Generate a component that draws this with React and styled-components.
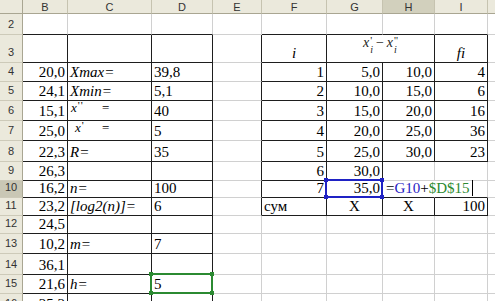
import React from "react";
import styled, { createGlobalStyle } from "styled-components";

const GlobalStyle = createGlobalStyle`
  html, body { margin: 0; padding: 0; background: #fff; overflow: hidden; }
  #root { width: 495px; height: 301px; overflow: hidden; }
`;

const COLS = ["B", "C", "D", "E", "F", "G", "H", "I", "J"];
const COL_W = [45, 84, 61, 49, 65, 56, 52, 53, 60];
const ROWS = [2, 3, 4, 5, 6, 7, 8, 9, 10, 11, 12, 13, 14, 15, 16];
const ROW_H = { 2: 21, 3: 28, 4: 19, 5: 19, 6: 20, 7: 20, 8: 21, 9: 19, 10: 17, 11: 18, 12: 18, 13: 20, 14: 21, 15: 19, 16: 20 };
const ACTIVE_COL = "H";
const ACTIVE_ROW = 10;

const Sheet = styled.div`
  display: grid;
  grid-template-columns: ${(p) => p.$cols};
  grid-template-rows: ${(p) => p.$rows};
  width: 495px;
  height: 301px;
  overflow: hidden;
  background: #fff;
`;

const Corner = styled.div`
  box-sizing: border-box;
  background: #ebe9dc;
  border-right: 1px solid #a9a692;
  border-bottom: 1px solid #a9a692;
`;

const ColHead = styled.div`
  box-sizing: border-box;
  background: ${(p) => (p.$active ? "#d2d0bd" : "#ebe9dc")};
  border-right: 1px solid #c6c3b0;
  border-bottom: 1px solid #a9a692;
  font-family: "Liberation Sans", Arial, sans-serif;
  font-size: 11px;
  line-height: 14px;
  color: #333;
  text-align: center;
  overflow: hidden;
`;

const RowHead = styled.div`
  box-sizing: border-box;
  background: ${(p) => (p.$active ? "#c9c7b5" : "#ebe9dc")};
  border-right: 1px solid #a9a692;
  border-bottom: 1px solid #cdcab9;
  font-family: "Liberation Sans", Arial, sans-serif;
  font-size: 11px;
  line-height: 11px;
  color: #333;
  display: flex;
  align-items: flex-end;
  justify-content: center;
  padding-bottom: 4px;
`;

const LINE = { dark: "#1e1e1e", grid: "#d0d0d0" };

const Cell = styled.div`
  box-sizing: border-box;
  position: relative;
  display: flex;
  align-items: flex-end;
  justify-content: ${(p) =>
    p.$align === "right" ? "flex-end" : p.$align === "center" ? "center" : "flex-start"};
  padding: 0 2px 1px 2px;
  border-right: 1px solid ${(p) => LINE[p.$rb]};
  border-bottom: 1px solid ${(p) => LINE[p.$bb]};
  grid-column: ${(p) => (p.$span ? `span ${p.$span}` : "auto")};
  font-family: "Liberation Serif", "Times New Roman", serif;
  font-size: 15px;
  line-height: 15px;
  font-style: ${(p) => (p.$italic ? "italic" : "normal")};
  white-space: nowrap;
  color: #000;
`;

const Embedded = styled.span`
  display: inline-flex;
  align-items: baseline;
  margin-bottom: 5px;
  padding-left: ${(p) => p.$indent}px;
  font-family: "Liberation Serif", "Times New Roman", serif;
  font-size: 13px;
  line-height: 13px;
`;

const EmbVar = styled.span`
  display: inline-flex;
  align-items: baseline;
  width: ${(p) => p.$w}px;
  font-style: italic;
`;

const Prime = styled.span`
  display: inline-block;
  font-size: 11px;
  font-style: normal;
  line-height: 11px;
  margin-left: 1px;
  letter-spacing: 1px;
  transform: translateY(-3px);
`;

const Scripts = styled.span`
  display: inline-flex;
  flex-direction: column;
  align-items: flex-start;
  margin-left: 1px;
  font-size: 10px;
  line-height: 7px;
  transform: translateY(-3px);
`;

const ScriptUp = styled.span`
  font-style: normal;
  font-size: 11px;
`;

const ScriptDown = styled.span`
  font-style: italic;
  padding-top: 2px;
`;

const MathHead = styled.span`
  display: inline-flex;
  align-items: baseline;
  margin-bottom: 5px;
  font-family: "Liberation Serif", "Times New Roman", serif;
  font-size: 14px;
  line-height: 14px;
  color: #222;
`;

const MathVar = styled.span`
  font-style: italic;
`;

const Minus = styled.span`
  margin: 0 3px 0 3px;
`;

const RangeFrame = styled.div`
  position: absolute;
  left: -2px;
  top: -2px;
  right: -1px;
  bottom: -1px;
  border: 2px solid ${(p) => p.$color};
  z-index: 3;
  pointer-events: none;
`;

const Handle = styled.span`
  position: absolute;
  width: 4px;
  height: 4px;
  background: ${(p) => p.$color};
  ${(p) => (p.$v === "top" ? "top: -3px;" : "bottom: -3px;")}
  ${(p) => (p.$h === "left" ? "left: -3px;" : "right: -3px;")}
`;

const Editor = styled.div`
  position: absolute;
  left: -1px;
  top: 0;
  bottom: 0;
  width: 100px;
  box-sizing: border-box;
  background: #fff;
  border-left: 1px solid #efe39a;
  display: flex;
  align-items: flex-end;
  padding: 0 0 1px 3px;
  z-index: 2;
  font-family: "Liberation Serif", "Times New Roman", serif;
  font-size: 15px;
  line-height: 15px;
`;

const Ref = styled.span`
  color: ${(p) => p.$color};
`;

const Caret = styled.span`
  display: inline-block;
  width: 1px;
  height: 16px;
  margin-left: 2px;
  background: #000;
  align-self: flex-end;
`;

const BLUE = "#1f22c4";
const GREEN = "#2b8a31";

const Range = ({ color }) => (
  <RangeFrame $color={color}>
    <Handle $color={color} $v="top" $h="left" />
    <Handle $color={color} $v="top" $h="right" />
    <Handle $color={color} $v="bottom" $h="left" />
    <Handle $color={color} $v="bottom" $h="right" />
  </RangeFrame>
);

const R = (t) => ({ t, a: "right" });
const L = (t) => ({ t, a: "left" });
const I = (t) => ({ t, a: "left", i: true });

const DATA = {
  B4: R("20,0"), B5: R("24,1"), B6: R("15,1"), B7: R("25,0"), B8: R("22,3"), B9: R("26,3"),
  B10: R("16,2"), B11: R("23,2"), B12: R("24,5"), B13: R("10,2"), B14: R("36,1"), B15: R("21,6"),
  B16: R("25,2"),
  C4: I("Xmax="), C5: I("Xmin="),
  C6: {
    node: (
      <Embedded $indent={1}>
        <EmbVar $w={31}>
          x<Prime>''</Prime>
        </EmbVar>
        =
      </Embedded>
    ),
  },
  C7: {
    node: (
      <Embedded $indent={5}>
        <EmbVar $w={27}>
          x<Prime>'</Prime>
        </EmbVar>
        =
      </Embedded>
    ),
  },
  C8: I("R="), C10: I("n="), C11: I("[log2(n)]="), C13: I("m="), C15: I("h="),
  D4: L("39,8"), D5: L("5,1"), D6: L("40"), D7: L("5"), D8: L("35"), D10: L("100"), D11: L("6"),
  D13: L("7"), D15: { t: "5", a: "left", range: GREEN },
  F3: { t: "i", a: "center", i: true },
  G3: {
    span: 2,
    a: "center",
    node: (
      <MathHead>
        <MathVar>x</MathVar>
        <Scripts>
          <ScriptUp>'</ScriptUp>
          <ScriptDown>i</ScriptDown>
        </Scripts>
        <Minus>−</Minus>
        <MathVar>x</MathVar>
        <Scripts>
          <ScriptUp>''</ScriptUp>
          <ScriptDown>i</ScriptDown>
        </Scripts>
      </MathHead>
    ),
  },
  I3: { t: "fi", a: "center", i: true },
  F4: R("1"), F5: R("2"), F6: R("3"), F7: R("4"), F8: R("5"), F9: R("6"), F10: R("7"),
  G4: R("5,0"), G5: R("10,0"), G6: R("15,0"), G7: R("20,0"), G8: R("25,0"), G9: R("30,0"),
  G10: { t: "35,0", a: "right", range: BLUE },
  H4: R("10,0"), H5: R("15,0"), H6: R("20,0"), H7: R("25,0"), H8: R("30,0"),
  H10: { editor: true },
  I4: R("4"), I5: R("6"), I6: R("16"), I7: R("36"), I8: R("23"),
  F11: L("сум"), G11: { t: "X", a: "center" }, H11: { t: "X", a: "center" }, I11: R("100"),
};

const colIdx = (c) => COLS.indexOf(c);

const bordered = (c, r) => {
  const ci = colIdx(c);
  if (ci < 0) return false;
  if (ci <= 2 && r >= 3 && r <= 16) return true;
  if (ci >= 4 && ci <= 7 && r >= 3 && r <= 11) {
    if ((c === "H" || c === "I") && (r === 9 || r === 10)) return false;
    return true;
  }
  return false;
};

const rightLine = (c, r, span) => {
  const next = COLS[colIdx(c) + (span || 1)];
  return bordered(c, r) || bordered(next, r) ? "dark" : "grid";
};

const bottomLine = (c, r) => (bordered(c, r) || bordered(c, r + 1) ? "dark" : "grid");

export default function App() {
  const cols = ["23px", ...COL_W.map((w) => `${w}px`)].join(" ");
  const rows = ["14px", ...ROWS.map((r) => `${ROW_H[r]}px`)].join(" ");

  return (
    <>
      <GlobalStyle />
      <Sheet $cols={cols} $rows={rows}>
        <Corner />
        {COLS.map((c) => (
          <ColHead key={c} $active={c === ACTIVE_COL}>
            {c === "J" ? "" : c}
          </ColHead>
        ))}
        {ROWS.map((r) => {
          const cells = [];
          let skip = 0;
          COLS.forEach((c) => {
            if (skip > 0) {
              skip -= 1;
              return;
            }
            const d = DATA[`${c}${r}`] || {};
            if (d.span) skip = d.span - 1;
            cells.push(
              <Cell
                key={`${c}${r}`}
                $align={d.a}
                $italic={d.i}
                $span={d.span}
                $rb={rightLine(c, r, d.span)}
                $bb={bottomLine(c, r)}
              >
                {d.node || d.t}
                {d.range && <Range color={d.range} />}
                {d.editor && (
                  <Editor>
                    <Ref $color="#000">=</Ref>
                    <Ref $color={BLUE}>G10</Ref>
                    <Ref $color="#000">+</Ref>
                    <Ref $color={GREEN}>$D$15</Ref>
                    <Caret />
                  </Editor>
                )}
              </Cell>
            );
          });
          return (
            <React.Fragment key={r}>
              <RowHead $active={r === ACTIVE_ROW}>{r}</RowHead>
              {cells}
            </React.Fragment>
          );
        })}
      </Sheet>
    </>
  );
}
